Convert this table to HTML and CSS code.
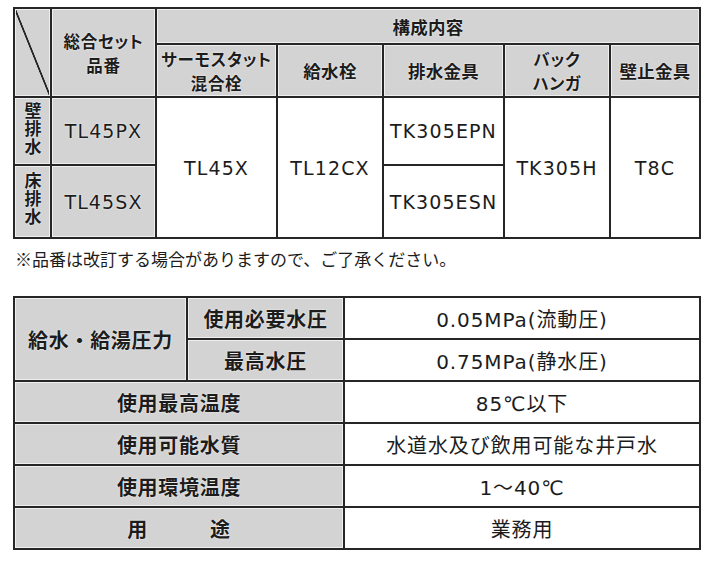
FILE: index.html
```html
<!DOCTYPE html>
<html lang="ja">
<head>
<meta charset="utf-8">
<title>仕様表</title>
<link rel="stylesheet" href="styles.css">
</head>
<body>
<div class="page">
  <table class="spec set-table">
    <colgroup>
      <col class="c1"><col class="c2"><col class="c3"><col class="c4"><col class="c5"><col class="c6"><col class="c7">
    </colgroup>
    <tr class="r1">
      <td class="gray corner" rowspan="2"></td>
      <td class="gray head multi" rowspan="2"><span class="ln">総合セット</span><span class="ln">品番</span></td>
      <td class="gray head" colspan="5">構成内容</td>
    </tr>
    <tr class="r2">
      <td class="gray head multi"><span class="ln">サーモスタット</span><span class="ln">混合栓</span></td>
      <td class="gray head">給水栓</td>
      <td class="gray head">排水金具</td>
      <td class="gray head multi"><span class="ln">バック</span><span class="ln">ハンガ</span></td>
      <td class="gray head">壁止金具</td>
    </tr>
    <tr class="r3">
      <td class="gray vert"><span class="vtext">壁排水</span></td>
      <td class="gray val">TL45PX</td>
      <td class="val" rowspan="2">TL45X</td>
      <td class="val" rowspan="2">TL12CX</td>
      <td class="val">TK305EPN</td>
      <td class="val" rowspan="2">TK305H</td>
      <td class="val" rowspan="2">T8C</td>
    </tr>
    <tr class="r4">
      <td class="gray vert"><span class="vtext">床排水</span></td>
      <td class="gray val">TL45SX</td>
      <td class="val">TK305ESN</td>
    </tr>
  </table>

  <p class="note">※品番は改訂する場合がありますので、ご了承ください。</p>

  <table class="spec cond-table">
    <colgroup>
      <col class="d1"><col class="d2"><col class="d3">
    </colgroup>
    <tr>
      <td class="gray label" rowspan="2">給水・給湯圧力</td>
      <td class="gray label">使用必要水圧</td>
      <td class="value">0.05MPa(流動圧)</td>
    </tr>
    <tr>
      <td class="gray label">最高水圧</td>
      <td class="value">0.75MPa(静水圧)</td>
    </tr>
    <tr>
      <td class="gray label" colspan="2">使用最高温度</td>
      <td class="value">85℃以下</td>
    </tr>
    <tr>
      <td class="gray label" colspan="2">使用可能水質</td>
      <td class="value">水道水及び飲用可能な井戸水</td>
    </tr>
    <tr>
      <td class="gray label" colspan="2">使用環境温度</td>
      <td class="value">1〜40℃</td>
    </tr>
    <tr>
      <td class="gray label" colspan="2">用　　　途</td>
      <td class="value">業務用</td>
    </tr>
  </table>
</div>
</body>
</html>
```

FILE: styles.css
```css
html, body {
  margin: 0;
  padding: 0;
  background: #ffffff;
}

body {
  font-family: "Noto Sans CJK JP", sans-serif;
  color: #1c1c1c;
}

.page {
  padding: 7px 0 0 13px;
}

.spec {
  border-collapse: collapse;
  table-layout: fixed;
  width: 688px;
}

.spec td {
  border: 2px solid #262626;
  padding: 0;
  text-align: center;
  vertical-align: middle;
}

.gray {
  background-color: #d3d3d3;
  box-shadow: inset 0 0 0 1px #efefef;
  text-shadow: 0 0 2px #ffffff;
}

/* top table */
.c1 { width: 37px; }
.c2 { width: 105px; }
.c3 { width: 121px; }
.c4 { width: 106px; }
.c5 { width: 121px; }
.c6 { width: 106px; }
.c7 { width: 90px; }

.set-table .r1 { height: 36px; }
.set-table .r2 { height: 53px; }
.set-table .r3 { height: 68px; }
.set-table .r4 { height: 73px; }

.corner {
  background-image: linear-gradient(to top right,
    transparent calc(50% - 1.2px),
    #262626 calc(50% - 0.6px),
    #262626 calc(50% + 0.6px),
    transparent calc(50% + 1.2px));
}

.head {
  font-size: 17.5px;
  font-weight: 700;
  font-feature-settings: "palt";
  letter-spacing: 0.3px;
}

.head.multi {
  font-size: 16.5px;
  letter-spacing: 0.7px;
}

.ln {
  display: block;
  line-height: 24px;
}

.vert {
  font-size: 17px;
  font-weight: 700;
}

.vtext {
  display: inline-block;
  writing-mode: vertical-rl;
  text-orientation: upright;
  letter-spacing: 1px;
  line-height: 20px;
}

.val {
  font-family: "DejaVu Sans", "Noto Sans CJK JP", sans-serif;
  font-size: 19px;
  letter-spacing: 1.1px;
}

.note {
  margin: 8px 0 0 2px;
  font-size: 17px;
  line-height: 24px;
}

/* bottom table */
.cond-table {
  margin-top: 25px;
}

.d1 { width: 173px; }
.d2 { width: 157px; }
.d3 { width: 356px; }

.cond-table tr { height: 42px; }

.label {
  font-size: 20px;
  font-weight: 700;
  letter-spacing: 0.7px;
}

.value {
  font-family: "DejaVu Sans", "Noto Sans CJK JP", sans-serif;
  font-size: 20px;
  letter-spacing: 0.9px;
}
```
